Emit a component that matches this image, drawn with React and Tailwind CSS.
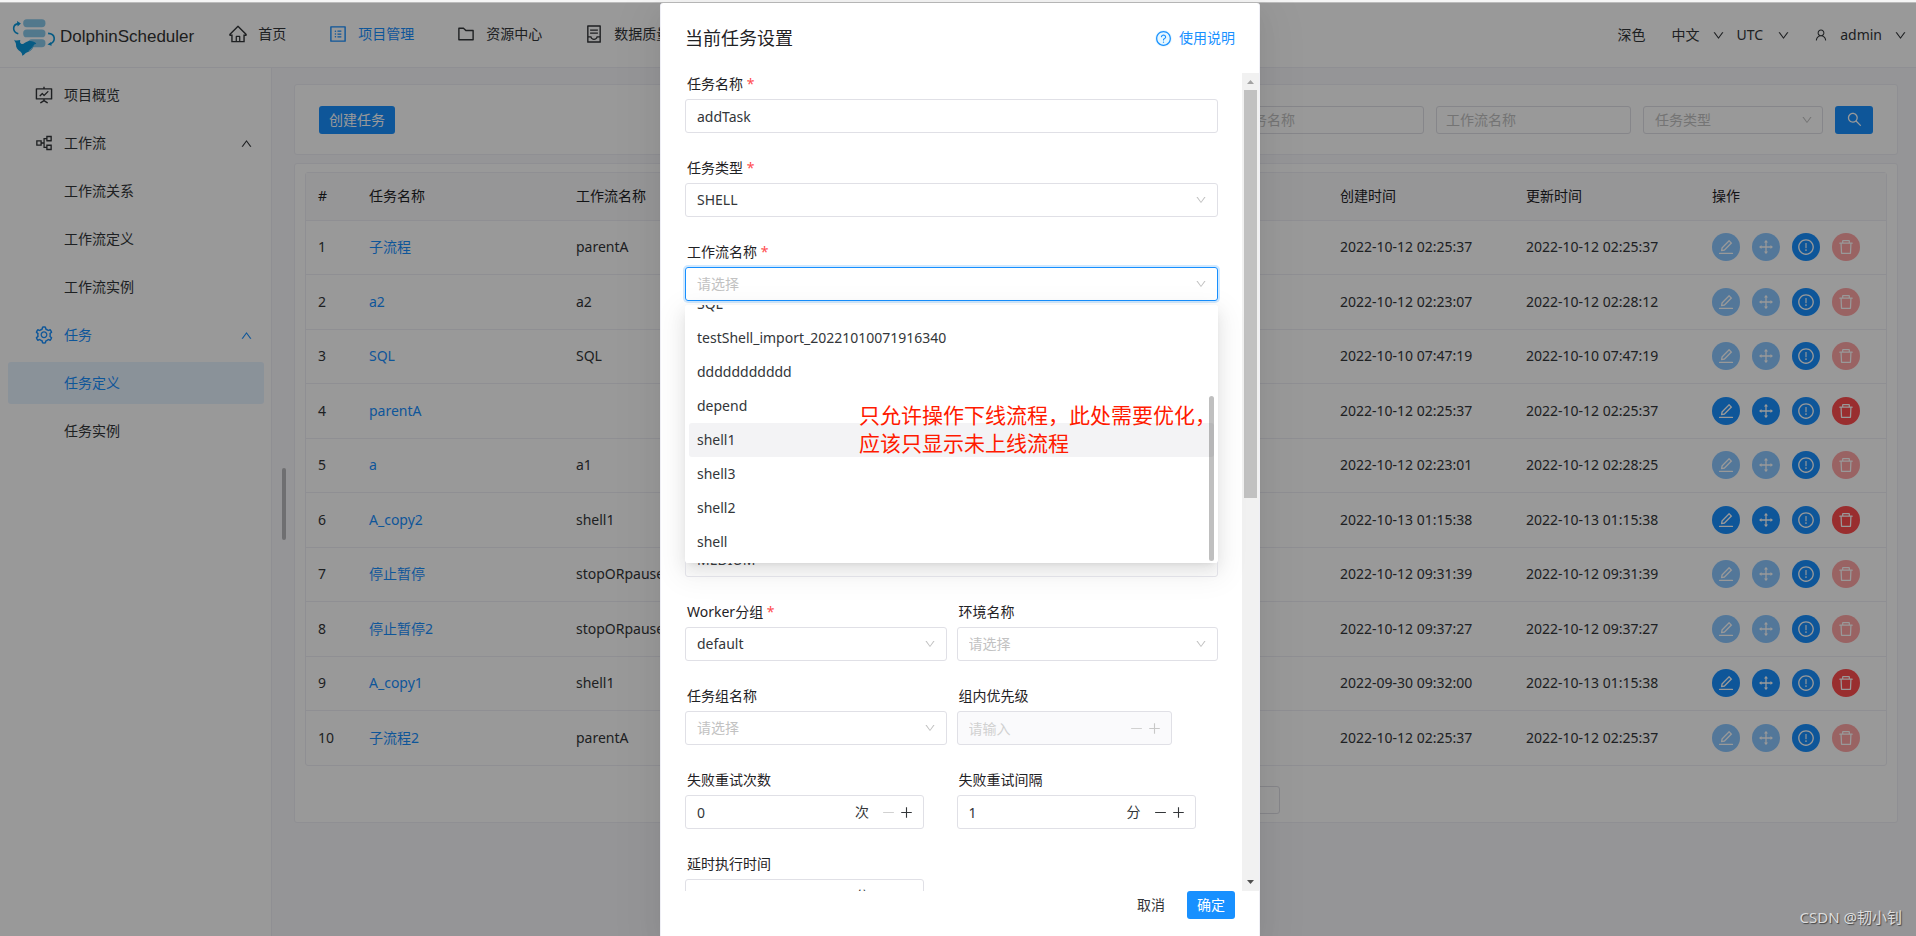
import React from "react";
import {
  AiOutlineHome,
  AiOutlineProfile,
  AiOutlineFolder,
  AiOutlineContainer,
  AiOutlineFundProjectionScreen,
  AiOutlinePartition,
  AiOutlineSetting,
  AiOutlineEdit,
  AiOutlineDrag,
  AiOutlineExclamationCircle,
  AiOutlineDelete,
  AiOutlineSearch,
  AiOutlineUser,
  AiOutlineDown,
  AiOutlineUp,
  AiOutlineMinus,
  AiOutlinePlus,
  AiOutlineQuestionCircle,
} from "react-icons/ai";

const navItems = [
  { label: "首页", Icon: AiOutlineHome },
  { label: "项目管理", Icon: AiOutlineProfile, active: true },
  { label: "资源中心", Icon: AiOutlineFolder },
  { label: "数据质量", Icon: AiOutlineContainer },
];

const sideItems = [
  { label: "项目概览", Icon: AiOutlineFundProjectionScreen },
  { label: "工作流", Icon: AiOutlinePartition, group: true },
  { label: "工作流关系" },
  { label: "工作流定义" },
  { label: "工作流实例" },
  { label: "任务", Icon: AiOutlineSetting, group: true, active: true },
  { label: "任务定义", active: true, selected: true },
  { label: "任务实例" },
];

const rows = [
  { name: "子流程", flow: "parentA", created: "2022-10-12 02:25:37", updated: "2022-10-12 02:25:37" },
  { name: "a2", flow: "a2", created: "2022-10-12 02:23:07", updated: "2022-10-12 02:28:12" },
  { name: "SQL", flow: "SQL", created: "2022-10-10 07:47:19", updated: "2022-10-10 07:47:19" },
  { name: "parentA", flow: "", created: "2022-10-12 02:25:37", updated: "2022-10-12 02:25:37", editable: true },
  { name: "a", flow: "a1", created: "2022-10-12 02:23:01", updated: "2022-10-12 02:28:25" },
  { name: "A_copy2", flow: "shell1", created: "2022-10-13 01:15:38", updated: "2022-10-13 01:15:38", editable: true },
  { name: "停止暂停", flow: "stopORpause", created: "2022-10-12 09:31:39", updated: "2022-10-12 09:31:39" },
  { name: "停止暂停2", flow: "stopORpause", created: "2022-10-12 09:37:27", updated: "2022-10-12 09:37:27" },
  { name: "A_copy1", flow: "shell1", created: "2022-09-30 09:32:00", updated: "2022-10-13 01:15:38", editable: true },
  { name: "子流程2", flow: "parentA", created: "2022-10-12 02:25:37", updated: "2022-10-12 02:25:37" },
];

const flowOptions = [
  "SQL",
  "testShell_import_20221010071916340",
  "ddddddddddd",
  "depend",
  "shell1",
  "shell3",
  "shell2",
  "shell",
];

function Logo() {
  return (
    <svg viewBox="36 50 132 113" className="h-[37px] w-11 shrink-0" aria-hidden="true">
      <g fill="#88c8ea">
        <rect x="69" y="51" width="68" height="24" rx="11" />
        <rect x="69" y="82" width="68" height="24" rx="11" />
        <rect x="84" y="112" width="53" height="24" rx="11" />
      </g>
      <g fill="none" stroke="#0a98dc" strokeWidth="5">
        <path d="M55 64 C36 66 34 89 54 95" />
        <path d="M145 94 C168 95 170 118 150 127" />
      </g>
      <path fill="#0a98dc" d="M50 56 L62 64 L52 73 Z M154 120 L156 132 L143 128 Z" />
      <path
        fill="#0a98dc"
        d="M42 113 C48 118 55 114 60 114 C60 119 58 122 62 125 C70 130 72 122 82 119 C93 115 104 120 109 125 C107 128 103 126 101 130 C99 142 90 149 80 152 C75 153 73 160 66 162 C66 157 65 154 61 150 C52 144 46 136 47 127 C47 121 42 118 42 113 Z"
      />
      <path fill="#fff" opacity=".7" d="M84 149 C92 146 98 140 100 132 C95 140 90 144 84 149 Z" />
    </svg>
  );
}

function Header() {
  return (
    <header className="flex h-[65px] shrink-0 items-center justify-between border-b border-[#efeff5] bg-white">
      <div className="flex items-center">
        <a href="#home" className="mr-[34px] flex items-center gap-1 pl-3 pt-1">
          <Logo />
          <span className="font-['Liberation_Sans',Arial,sans-serif] text-[17px] leading-6 text-[#333]">
            DolphinScheduler
          </span>
        </a>
        <nav className="flex gap-[42px] pb-[2px]">
          {navItems.map(({ label, Icon, active }) => (
            <a
              key={label}
              href="#nav"
              className={`flex items-center gap-[10px] whitespace-nowrap ${active ? "text-[#1890ff]" : "text-[#333639]"}`}
            >
              <Icon size={20} />
              {label}
            </a>
          ))}
        </nav>
      </div>
      <div className="flex items-center pr-[9px] text-[#333639]">
        <button type="button" className="mr-[26px]">深色</button>
        <button type="button" className="mr-3 flex items-center gap-3">
          中文 <AiOutlineDown size={13} />
        </button>
        <button type="button" className="mr-6 flex items-center gap-[14px]">
          UTC <AiOutlineDown size={13} />
        </button>
        <button type="button" className="flex items-center gap-3">
          <AiOutlineUser size={14} />
          admin
          <AiOutlineDown size={13} />
        </button>
      </div>
    </header>
  );
}

function Sidebar() {
  return (
    <aside className="w-[272px] shrink-0 border-r border-[#efeff5] bg-white px-2 pt-[6px]">
      <ul className="flex flex-col gap-[6px]">
        {sideItems.map(({ label, Icon, group, active, selected }) => (
          <li key={label}>
            <a
              href="#side"
              className={`flex h-[42px] w-64 items-center rounded-[3px] pr-[11px] ${Icon ? "pl-[26px]" : "pl-14"} ${
                active ? "text-[#1890ff]" : "text-[#333639]"
              } ${selected ? "bg-[#e7f3ff]" : ""}`}
            >
              {Icon && <Icon size={20} className="mr-[10px]" />}
              {label}
              {group && <AiOutlineUp size={13} className="ml-auto" />}
            </a>
          </li>
        ))}
      </ul>
    </aside>
  );
}

function RoundButton({ label, Icon, danger, disabled }) {
  return (
    <button
      type="button"
      aria-label={label}
      disabled={disabled}
      className={`flex size-7 items-center justify-center rounded-full text-white ${
        danger ? "bg-[#ff4d4f]" : "bg-[#1890ff]"
      } ${disabled ? "opacity-50" : ""}`}
    >
      <Icon size={18} />
    </button>
  );
}

function TaskTable() {
  return (
    <div className="rounded-[3px] border border-[#efeff5]">
      <table className="w-full table-fixed border-collapse text-left">
        <colgroup>
          <col className="w-[51px]" />
          <col className="w-[207px]" />
          <col />
          <col className="w-[186px]" />
          <col className="w-[186px]" />
          <col className="w-[186px]" />
        </colgroup>
        <thead>
          <tr className="h-[47px] border-b border-[#efeff5] bg-[#fafafc] text-[#1f2225]">
            {["#", "任务名称", "工作流名称", "创建时间", "更新时间", "操作"].map((h) => (
              <th key={h} className="px-3 font-normal">{h}</th>
            ))}
          </tr>
        </thead>
        <tbody>
          {rows.map((r, i) => (
            <tr
              key={i}
              className="border-b border-[#efeff5] text-[#333639] last:border-b-0 odd:h-[54px] even:h-[55px]"
            >
              <td className="px-3">{i + 1}</td>
              <td className="px-3">
                <a href="#task" className="text-[#1890ff]">{r.name}</a>
              </td>
              <td className="px-3">{r.flow}</td>
              <td className="whitespace-nowrap px-3">{r.created}</td>
              <td className="whitespace-nowrap px-3">{r.updated}</td>
              <td className="px-3">
                <div className="flex gap-3">
                  <RoundButton label="编辑" Icon={AiOutlineEdit} disabled={!r.editable} />
                  <RoundButton label="移动" Icon={AiOutlineDrag} disabled={!r.editable} />
                  <RoundButton label="版本" Icon={AiOutlineExclamationCircle} />
                  <RoundButton label="删除" Icon={AiOutlineDelete} danger disabled={!r.editable} />
                </div>
              </td>
            </tr>
          ))}
        </tbody>
      </table>
    </div>
  );
}

function Content() {
  const box = "h-7 rounded-[3px] border border-[#e0e0e6] bg-white px-[9px] placeholder:text-[#c2c2c2]";
  return (
    <main className="flex min-w-0 flex-1 flex-col gap-2 bg-[#f8f8fc] pl-[22px] pr-[18px] pt-4">
      <section className="flex h-[71px] items-center justify-between rounded-[3px] border border-[#efeff5] bg-white px-6">
        <button type="button" className="h-7 rounded-[3px] bg-[#1890ff] px-[10px] text-white">
          创建任务
        </button>
        <div className="flex gap-3">
          <input aria-label="任务名称" placeholder="任务名称" className={`w-[195px] ${box}`} />
          <input aria-label="工作流名称" placeholder="工作流名称" className={`w-[195px] ${box}`} />
          <div className="relative">
            <select
              aria-label="任务类型"
              defaultValue=""
              className="h-7 w-[180px] appearance-none rounded-[3px] border border-[#e0e0e6] bg-white px-[11px] text-[#c2c2c2]"
            >
              <option value="">任务类型</option>
            </select>
            <AiOutlineDown size={12} className="pointer-events-none absolute right-[10px] top-2 text-[#c2c2c2]" />
          </div>
          <button
            type="button"
            aria-label="搜索"
            className="flex h-7 w-[38px] items-center justify-center rounded-[3px] bg-[#1890ff] text-white"
          >
            <AiOutlineSearch size={17} />
          </button>
        </div>
      </section>
      <section className="rounded-[3px] border border-[#efeff5] bg-white px-[10px] pb-2 pt-2">
        <TaskTable />
        <div className="mt-5 flex justify-center">
          <input aria-label="页码" className="ml-[308px] h-7 w-[60px] rounded-[3px] border border-[#e0e0e6]" />
        </div>
      </section>
    </main>
  );
}

function Field({ id, label, required, children }) {
  return (
    <div className="pb-6">
      <label htmlFor={id} className="block pb-1 pl-[2px] leading-[22px] text-[#1f2225]">
        {label}
        {required && <span className="text-[#ff4d4f]"> *</span>}
      </label>
      {children}
    </div>
  );
}

function SelectBox({ id, value, placeholder, focused, name }) {
  return (
    <div className="relative">
      <select
        id={id}
        aria-label={name}
        defaultValue=""
        className={`block h-[34px] w-full appearance-none rounded-[3px] border bg-transparent px-[11px] ${
          value ? "text-[#333639]" : "text-[#c2c2c2]"
        } ${focused ? "border-[#1890ff] shadow-[0_0_0_2px_rgba(24,144,255,0.2)]" : "border-[#e0e0e6]"}`}
      >
        <option value="">{value || placeholder}</option>
      </select>
      <AiOutlineDown size={12} className="pointer-events-none absolute right-[11px] top-[11px] text-[#c2c2c2]" />
    </div>
  );
}

function NumberBox({ id, value, placeholder, unit, disabled, minusOff, narrow }) {
  return (
    <div
      className={`flex h-[34px] items-center rounded-[3px] border border-[#e0e0e6] pr-[9px] ${
        narrow ? "w-[215px]" : "w-[239px]"
      } ${disabled ? "bg-[#fafafc]" : "bg-white"}`}
    >
      <input
        id={id}
        type="text"
        defaultValue={value}
        placeholder={placeholder}
        disabled={disabled}
        className="h-full min-w-0 flex-1 bg-transparent pl-[11px] text-[#333639] placeholder:text-[#d1d1d1]"
      />
      {unit && <span className="mr-3 text-[#333639]">{unit}</span>}
      <button type="button" aria-label="减少" className={disabled || minusOff ? "text-[#d1d1d1]" : "text-[#333639]"}>
        <AiOutlineMinus size={15} />
      </button>
      <button type="button" aria-label="增加" className={`ml-[3px] ${disabled ? "text-[#c8c8c8]" : "text-[#333639]"}`}>
        <AiOutlinePlus size={15} />
      </button>
    </div>
  );
}

function FlowMenu() {
  return (
    <div className="absolute inset-x-0 top-[38px] z-10 flex h-[258px] flex-col justify-end overflow-hidden rounded-[3px] bg-white py-1">
      <ul role="listbox" aria-label="工作流名称" className="px-1">
        {flowOptions.map((o) => (
          <li
            key={o}
            role="option"
            aria-selected={o === "shell1"}
            className={`flex h-[34px] items-center rounded-[3px] px-2 text-[#333639] ${o === "shell1" ? "bg-[#f3f3f5]" : ""}`}
          >
            {o}
          </li>
        ))}
      </ul>
      <div className="absolute bottom-[2px] right-1 h-[165px] w-[5px] rounded-full bg-black/25" />
      <p className="absolute left-[174px] top-24 whitespace-nowrap text-[21px] leading-7 text-[#ff1a00]">
        只允许操作下线流程，此处需要优化，
        <br />
        应该只显示未上线流程
      </p>
    </div>
  );
}

function TaskForm() {
  return (
    <form className="min-w-0 flex-1 px-6">
      <Field id="taskName" label="任务名称" required>
        <input
          id="taskName"
          defaultValue="addTask"
          className="block h-[34px] w-full rounded-[3px] border border-[#e0e0e6] px-[11px] text-[#333639]"
        />
      </Field>
      <Field id="taskType" label="任务类型" required>
        <SelectBox id="taskType" value="SHELL" />
      </Field>
      <Field id="flowName" label="工作流名称" required>
        <div className="relative">
          <SelectBox id="flowName" placeholder="请选择" focused />
          <div className="absolute inset-x-0 top-[38px] h-[258px] rounded-[3px] shadow-[0_3px_6px_-4px_rgba(0,0,0,.12),0_6px_16px_0_rgba(0,0,0,.08),0_9px_28px_8px_rgba(0,0,0,.05)]" />
          <FlowMenu />
        </div>
      </Field>
      <div className="pb-6 pt-[218px]">
        <SelectBox id="priority" name="任务优先级" value="MEDIUM" />
      </div>
      <div className="grid grid-cols-2 gap-x-[10px]">
        <Field id="worker" label="Worker分组" required>
          <SelectBox id="worker" value="default" />
        </Field>
        <Field id="env" label="环境名称">
          <SelectBox id="env" placeholder="请选择" />
        </Field>
        <Field id="group" label="任务组名称">
          <SelectBox id="group" placeholder="请选择" />
        </Field>
        <Field id="groupPriority" label="组内优先级">
          <NumberBox id="groupPriority" placeholder="请输入" disabled narrow />
        </Field>
        <Field id="retries" label="失败重试次数">
          <NumberBox id="retries" value="0" unit="次" minusOff />
        </Field>
        <Field id="interval" label="失败重试间隔">
          <NumberBox id="interval" value="1" unit="分" />
        </Field>
        <Field id="delay" label="延时执行时间">
          <NumberBox id="delay" value="0" unit="分" minusOff />
        </Field>
      </div>
    </form>
  );
}

function ScrollTrack() {
  return (
    <div className="flex w-[17px] shrink-0 flex-col items-center bg-[#f1f1f1]" aria-hidden="true">
      <svg viewBox="0 0 17 17" className="size-[17px] shrink-0">
        <path d="M5 11 L8.500 7 L12 11 Z" fill="#a3a3a3" />
      </svg>
      <div className="h-[408px] w-[13px] bg-[#c1c1c1]" />
      <svg viewBox="0 0 17 17" className="mt-auto size-[17px] shrink-0">
        <path d="M5 6 L8.500 10 L12 6 Z" fill="#505050" />
      </svg>
    </div>
  );
}

function TaskModal() {
  return (
    <section
      role="dialog"
      aria-label="当前任务设置"
      className="flex h-full w-[600px] flex-col rounded-t-[3px] border-x border-[#efeff5] bg-white shadow-[0_6px_16px_-9px_rgba(0,0,0,.08),0_9px_28px_0_rgba(0,0,0,.05),0_12px_48px_16px_rgba(0,0,0,.03)]"
    >
      <div className="flex h-[70px] shrink-0 items-center justify-between px-6">
        <h1 className="text-[18px] text-[#1f2225]">当前任务设置</h1>
        <a href="#help" className="flex items-center gap-[7px] text-[#1890ff]">
          <AiOutlineQuestionCircle size={17} className="rounded-full bg-[#e6f7ff]" />
          使用说明
        </a>
      </div>
      <div className="flex min-h-0 flex-1 overflow-hidden">
        <TaskForm />
        <ScrollTrack />
      </div>
      <div className="flex h-[45px] shrink-0 items-start justify-end gap-[22px] px-6">
        <button type="button" className="h-7 text-[#333639]">取消</button>
        <button type="button" className="h-7 rounded-[3px] bg-[#1890ff] px-[10px] text-white">确定</button>
      </div>
    </section>
  );
}

export default function App() {
  return (
    <div className="relative flex h-screen flex-col overflow-hidden font-['Noto_Sans','Noto_Sans_CJK_SC',sans-serif] text-[14px] leading-[22px]">
      <div className="h-[3px] shrink-0 border-b border-[#bbb] bg-[#f5f5f5]" />
      <Header />
      <div className="flex min-h-0 flex-1">
        <Sidebar />
        <Content />
      </div>
      <div className="absolute left-[282px] top-[468px] h-[72px] w-1 rounded-full bg-black/25" />
      <div className="absolute inset-x-0 bottom-0 top-[3px] flex justify-center bg-black/40 pl-1">
        <TaskModal />
      </div>
      <p className="absolute bottom-2 right-[14px] text-[15px] text-[#ddd] [text-shadow:1px_1px_1px_#444]">
        CSDN @韧小钊
      </p>
    </div>
  );
}
